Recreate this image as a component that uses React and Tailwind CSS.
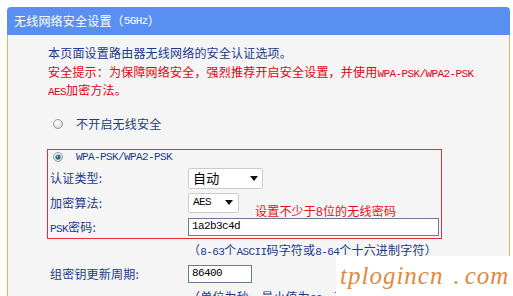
const cjk = "font-['Noto_Sans_CJK_SC','Liberation_Sans',sans-serif]";

function A({ children, className = "" }) {
  return <span className={"font-['Liberation_Mono',monospace] text-[11px] leading-none tracking-[-0.6px] " + className}>{children}</span>;
}

function Radio({ checked }) {
  return (
    <svg width="10" height="10" viewBox="0 0 10 10" className="shrink-0">
      <defs>
        <radialGradient id={checked ? "rc" : "ru"} cx="40%" cy="35%" r="70%">
          <stop offset="0%" stopColor="#ffffff" />
          <stop offset="100%" stopColor="#d4d4d4" />
        </radialGradient>
      </defs>
      <circle cx="5" cy="5" r="4.5" fill={checked ? "url(#rc)" : "url(#ru)"} stroke="#9c9c9c" strokeWidth="1" />
      {checked && <circle cx="5" cy="5" r="2.6" fill="#2c6b86" />}
      {checked && <circle cx="4.4" cy="4.3" r="1" fill="#7fc3d8" />}
    </svg>
  );
}

function Arrow() {
  return (
    <svg width="8" height="5" viewBox="0 0 8 5" className="shrink-0">
      <path d="M0 0 L8 0 L4 5 Z" fill="#111" />
    </svg>
  );
}

export default function App() {
  return (
    <div className={"w-[513px] h-[296px] overflow-hidden bg-white relative pt-[7px] text-[12px] " + cjk}>
      <div className="ml-[7px] w-[503px] h-[289px] flex flex-col rounded-t-[4px] overflow-hidden">
        {/* Header */}
        <div className="h-[28px] shrink-0 bg-[#5a8ff2] flex items-center pl-[7px] text-white tracking-[0.2px]">
          无线网络安全设置（<A>5GHz</A>）
        </div>

        {/* Body */}
        <div className="flex-1 bg-[#f5f5f5] border-x border-[#f0b35e] pl-[40px] pt-[9px] tracking-[0.2px] whitespace-nowrap">
          <p className="h-[18.5px] leading-[18.5px] text-[#1c3a8c]">本页面设置路由器无线网络的安全认证选项。</p>
          <p className="h-[18.5px] leading-[18.5px] text-[#e60012]">
            安全提示：为保障网络安全，强烈推荐开启安全设置，并使用<A>WPA-PSK/WPA2-PSK</A>
          </p>
          <p className="h-[18.5px] leading-[18.5px] text-[#e60012]">
            <A>AES</A>加密方法。
          </p>

          <div className="mt-[15px] h-[18px] flex items-center pl-[5px] gap-[13px] text-[#1c3a8c]">
            <Radio />
            <span className="leading-[18px]">不开启无线安全</span>
          </div>

          {/* WPA box */}
          <div className="relative -ml-px w-[395px] mt-[16px] border border-[#e0313a] pb-[2px] text-[#1c3a8c]">
            <div className="h-[15px] flex items-center pl-[5px] gap-[13px]">
              <Radio checked />
              <A>WPA-PSK/WPA2-PSK</A>
            </div>

            <div className="mt-[3px] h-[21px] flex items-center">
              <span className="w-[140px] pl-[2px] leading-[18px]">认证类型:</span>
              <div className="w-[75px] h-[21px] bg-white border border-[#cbcbcb] rounded-[2px] flex items-center justify-between pl-[4px] pr-[4px] text-[13px] leading-[18px] text-black">
                <span>自动</span>
                <Arrow />
              </div>
            </div>

            <div className="mt-[4px] h-[20px] flex items-center">
              <span className="w-[140px] pl-[2px] leading-[18px]">加密算法:</span>
              <div className="w-[51px] h-[20px] bg-white border border-[#cbcbcb] rounded-[2px] flex items-center justify-between pl-[4px] pr-[5px] text-black">
                <A>AES</A>
                <Arrow />
              </div>
            </div>

            <div className="mt-[5px] h-[18px] flex items-center">
              <span className="w-[140px] pl-[2px] leading-[18px]"><A>PSK</A>密码:</span>
              <div className="w-[251px] h-[18px] bg-white border border-[#6b7a99] flex items-center pl-[3px] text-black">
                <A>1a2b3c4d</A>
              </div>
            </div>

            <span className="absolute left-[207px] top-[52px] leading-[18px] text-[#e8101a]">设置不少于<span className="font-['Liberation_Sans',sans-serif] leading-none">8</span>位的无线密码</span>
          </div>

          <div className="mt-[2px] h-[18px] leading-[18px] pl-[140px] text-[#1c3a8c]">
            （<A>8-63</A>个<A>ASCII</A>码字符或<A>8-64</A>个十六进制字符）
          </div>

          <div className="mt-[6px] h-[18px] flex items-center text-[#1c3a8c]">
            <span className="w-[140px] pl-[2px] leading-[18px]">组密钥更新周期:</span>
            <div className="w-[64px] h-[18px] bg-white border border-[#6b7a99] flex items-center pl-[3px] text-black">
              <A>86400</A>
            </div>
          </div>

          <div className="mt-[5px] h-[18px] leading-[18px] pl-[140px] text-[#1c3a8c]">
            （单位为秒，最小值为<A>30</A>，不更新则为<A>0</A>）
          </div>
        </div>
      </div>

      {/* Watermark */}
      <div className="absolute right-0 bottom-0 w-[177px] h-[40px] bg-white pl-[4px] flex items-end pb-[8px]">
        <span className="font-['Liberation_Serif',serif] italic text-[25px] leading-[25px] tracking-[1px] text-[#de8a3e]">
          tplogincn<span className="ml-[10px]">.</span><span className="ml-[4px]">com</span>
        </span>
      </div>
    </div>
  );
}
